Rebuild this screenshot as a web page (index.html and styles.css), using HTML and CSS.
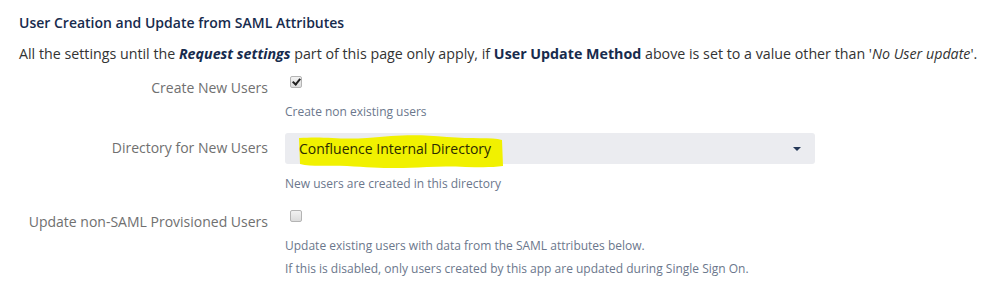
FILE: index.html
```html
<!DOCTYPE html>
<html lang="en">
<head>
    <meta charset="UTF-8">
    <title>SAML Attributes</title>
    <link rel="stylesheet" href="styles.css">
</head>
<body>
<div class="section">
    <h3>User Creation and Update from SAML Attributes</h3>
    <p class="intro">All the settings until the <b><i>Request settings</i></b> part of this page only apply, if <b>User Update Method</b> above is set to a value other than '<i>No User update</i>'.</p>

    <div class="field">
        <label class="field-label" for="create">Create New Users</label>
        <div class="field-control">
            <input type="checkbox" id="create" checked>
            <div class="description">Create non existing users</div>
        </div>
    </div>

    <div class="field field-select">
        <label class="field-label" for="dir">Directory for New Users</label>
        <div class="field-control">
            <div class="select">
                <svg class="highlight" width="210" height="36" viewBox="0 0 210 36">
                    <path d="M2 4 C30 2 40 6 70 4 C100 1 120 0 150 3 C175 5 195 3 205 6 L206 32 C185 35 160 31 130 33 C100 35 80 34 50 32 C30 31 15 33 3 30 Z" fill="#f1f100"/>
                </svg>
                <span class="select-value">Confluence Internal Directory</span>
                <span class="select-arrow"></span>
            </div>
            <div class="description">New users are created in this directory</div>
        </div>
    </div>

    <div class="field field-last">
        <label class="field-label" for="update">Update non-SAML Provisioned Users</label>
        <div class="field-control">
            <input type="checkbox" id="update">
            <div class="description">Update existing users with data from the SAML attributes below.</div>
            <div class="description">If this is disabled, only users created by this app are updated during Single Sign On.</div>
        </div>
    </div>
</div>
</body>
</html>
```

FILE: styles.css
```css
body { margin: 0; background: #fff; font-family: "Open Sans", "Noto Sans", Arial, sans-serif; color: #172b4d; }
.section { padding: 14px 0 0 19px; }
h3 { margin: 0; font-size: 14px; font-weight: 600; line-height: 18px; color: #172b4d; }
.intro { margin: 12px 0 0; font-size: 14.25px; line-height: 20px; color: #333; }
.intro b { color: #172b4d; }

.field { display: flex; margin-top: 12px; }
.field-label {
    width: 249px; text-align: right; padding-right: 17px;
    font-size: 14px; color: #707070; line-height: 20px; padding-top: 2px;
}
.field-control { flex: 1; }
.field input[type="checkbox"] {
    appearance: none; -webkit-appearance: none;
    display: block; box-sizing: border-box;
    margin: 0 0 0 5px; width: 12px; height: 12px;
    border: 1px solid #b4b4b4; border-radius: 2px;
    background: linear-gradient(#f2f2f2, #dcdcdc);
    position: relative;
}
.field input[type="checkbox"]:checked::after {
    content: ""; position: absolute; left: 3px; top: 0px;
    width: 3px; height: 6px;
    border: solid #222; border-width: 0 2px 2px 0;
    transform: rotate(40deg);
}
.description { font-size: 12px; color: #6b778c; line-height: 23px; }
.field-control input + .description { margin-top: 12px; }

.field-select { margin-top: 10px; }
.field-select .field-label { padding-top: 5px; }
.field-last { margin-top: 15px; }
.select {
    position: relative; width: 530px; height: 31px; box-sizing: border-box;
    background: #ebecf0; border-radius: 3px; display: flex; align-items: center;
    padding: 0 14px;
}
.highlight { position: absolute; left: 12px; top: 1px; }
.select-value { position: relative; font-size: 14px; color: #2b2b00; }
.select-arrow {
    margin-left: auto; width: 0; height: 0;
    border-left: 4px solid transparent; border-right: 4px solid transparent;
    border-top: 4px solid #253858;
}
.select + .description { margin-top: 8px; }
```
